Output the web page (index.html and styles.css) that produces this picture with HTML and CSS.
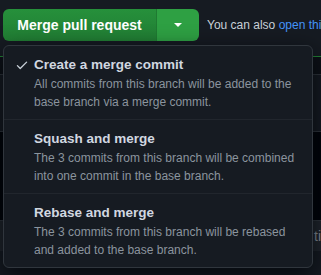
FILE: index.html
```html
<!DOCTYPE html>
<html lang="en">
<head>
  <meta charset="UTF-8">
  <title>Merge pull request</title>
  <meta name="viewport" content="width=device-width, initial-scale=1.0">
  <link rel="stylesheet" href="styles.css">
</head>
<body>
  <div class="merge-row">
    <div class="btn-group">
      <button class="btn-merge">Merge pull request</button>
      <button class="btn-caret"><span class="caret"></span></button>
    </div>
    <p class="hint">You can also <a href="#">open this in GitHub Desktop</a></p>
  </div>

  <!-- page behind the menu -->
  <div class="panel">
    <div class="band band-a"></div>
    <div class="band band-b"></div>
    <div class="band band-c"></div>
    <div class="band band-d"><span class="peek">tine</span></div>
  </div>

  <!-- Merge method menu -->
  <div class="menu">
    <div class="menu-item">
      <svg class="check" viewBox="0 0 16 16" width="14" height="14"><path fill="currentColor" d="M13.78 4.22a.75.75 0 0 1 0 1.06l-7.25 7.25a.75.75 0 0 1-1.06 0L2.220 9.28a.751.751 0 0 1 .018-1.042.751.751 0 0 1 1.042-.018L6 10.94l6.72-6.72a.75.75 0 0 1 1.06 0Z"/></svg>
      <div class="item-title">Create a merge commit</div>
      <div class="item-desc">All commits from this branch will be added to the base branch via a merge commit.</div>
    </div>
    <div class="menu-item">
      <div class="item-title">Squash and merge</div>
      <div class="item-desc">The 3 commits from this branch will be combined into one commit in the base branch.</div>
    </div>
    <div class="menu-item">
      <div class="item-title">Rebase and merge</div>
      <div class="item-desc">The 3 commits from this branch will be rebased and added to the base branch.</div>
    </div>
  </div>
</body>
</html>
```

FILE: styles.css
```css
body { margin: 0; background: #161b22; font-family: "Liberation Sans", Arial, sans-serif; color: #e6edf3; overflow: hidden; height: 275px; position: relative; }

.merge-row { display: flex; align-items: center; gap: 8px; padding: 9px 0 0 3px; white-space: nowrap; }
.btn-group { display: flex; height: 32px; }
.btn-group button { border: 0; color: #fff; font: bold 14px "Liberation Sans", Arial, sans-serif; cursor: pointer; }
.btn-merge { width: 154px; background: linear-gradient(#26903b, #217e34); border-radius: 6px 0 0 6px; border-right: 1px solid #1f7a32 !important; }
.btn-caret { width: 42px; background: #2ea043; border-radius: 0 6px 6px 0; display: flex; align-items: center; justify-content: center; }
.caret { width: 0; height: 0; border-left: 4px solid transparent; border-right: 4px solid transparent; border-top: 4px solid #fff; }
.hint { margin: 0; font-size: 12px; color: #c9d1d9; }
.hint a { color: #4493f8; text-decoration: none; }

.panel { margin-top: 15px; border-top: 1px solid #238636; }
.band-a { height: 17px; background: #0d1117; border-bottom: 1px solid #30363d; }
.band-b { height: 56px; background: #161b22; border-bottom: 1px solid #30363d; }
.band-c { height: 88px; background: #010409; }
.band-d { height: 30px; background: #21262d; border-top: 1px solid #30363d; font-size: 14px; line-height: 30px; color: #8b949e; padding-left: 314px; }

.menu { position: absolute; left: 3px; top: 45px; width: 308px; background: #161b22; border: 1px solid #30363d; border-radius: 6px; box-shadow: 0 8px 24px rgba(1, 4, 9, 0.8); }
.menu-item { position: relative; padding: 9px 16px 8px 30px; border-bottom: 1px solid #21262d; }
.menu-item:last-child { border-bottom: 0; }
.check { position: absolute; left: 11px; top: 12px; color: #c9d1d9; }
.item-title { font-size: 13.5px; font-weight: bold; line-height: 20px; color: #d1d7e0; }
.item-desc { font-size: 12px; line-height: 18px; color: #8b949e; }
```
